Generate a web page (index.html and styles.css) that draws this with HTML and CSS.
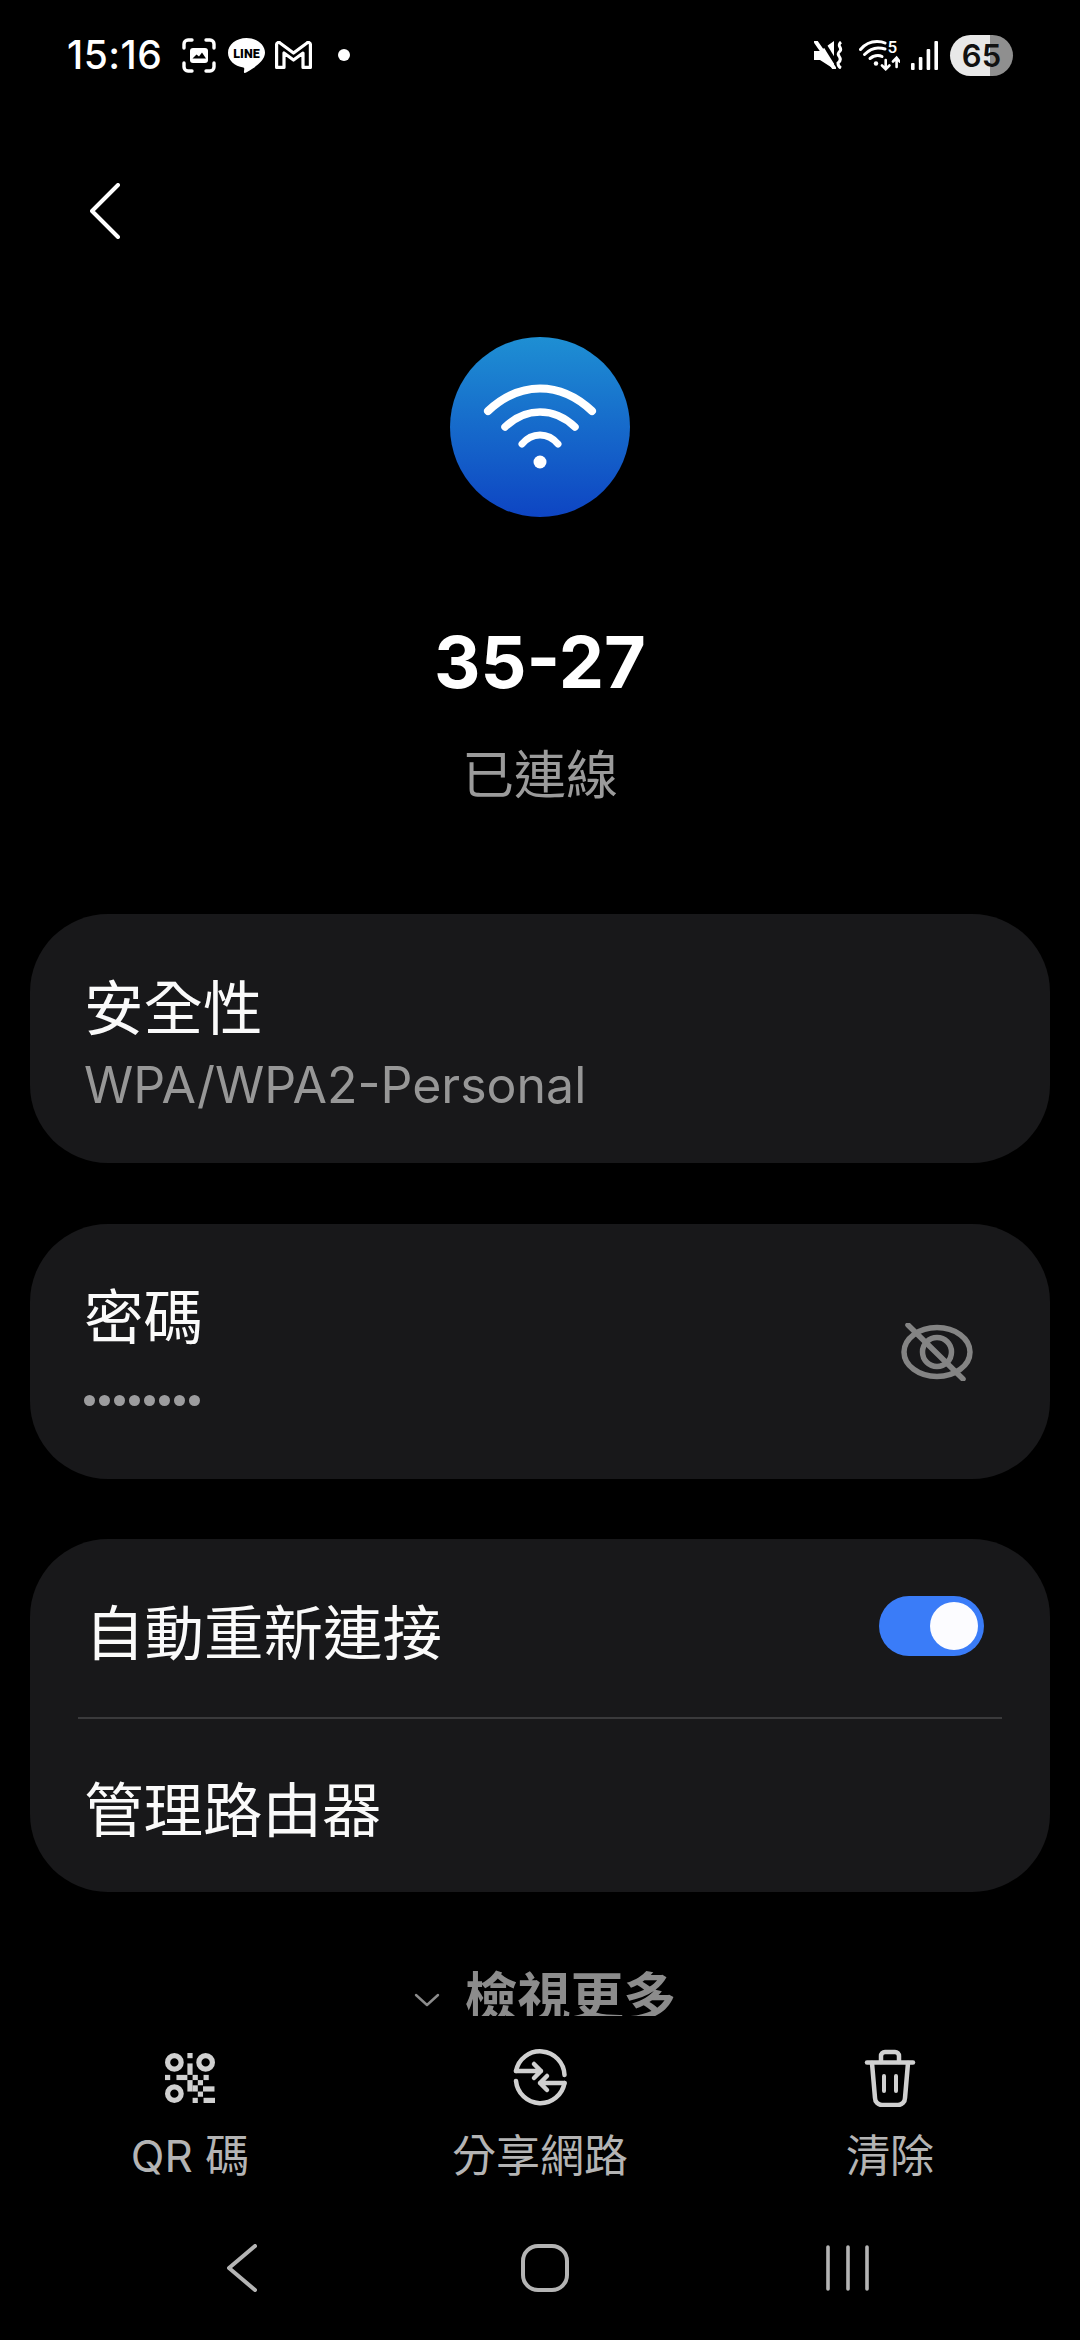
FILE: index.html
```html
<!DOCTYPE html>
<html lang="zh-Hant">
<head>
    <meta charset="UTF-8">
    <meta name="viewport" content="width=device-width, initial-scale=1.0">
    <title>35-27</title>
    <link rel="stylesheet" href="styles.css">
</head>
<body>
<div class="screen">
    <div class="scroll">
        <div class="status">
            <div class="status-left">
                <span class="time">15:16</span>
                <svg class="ic-shot" width="36" height="35" viewBox="0 0 36 35" fill="none" stroke="#fff" stroke-width="3.400" stroke-linecap="round">
                    <path d="M3 10V6a4 4 0 0 1 4-4h4M25 2h4a4 4 0 0 1 4 4v4M33 25v4a4 4 0 0 1-4 4h-4M11 33H7a4 4 0 0 1-4-4v-4"/>
                    <path d="M12 10h12a3 3 0 0 1 3 3v9a3 3 0 0 1-3 3H12a3 3 0 0 1-3-3v-9a3 3 0 0 1 3-3z" fill="#fff" stroke="none"/>
                    <path d="M11.500 20.500l4-4 2.500 2 3-4 4 6z" fill="#000" stroke="none"/>
                </svg>
                <svg class="ic-line" width="37" height="35" viewBox="0 0 37 35">
                    <path d="M18.500 0C8.300 0 0 6.600 0 14.800c0 7.400 6.500 13.500 15.400 14.700.8.200 1 1 .8 2l-.3 2.500c0 .8.600 1.300 1.500.8 3.500-1.700 19.600-10.400 19.600-20C37 6.600 28.700 0 18.500 0z" fill="#fff"/>
                    <text x="18.500" y="19.500" text-anchor="middle" class="line-word">LINE</text>
                </svg>
                <svg class="ic-gmail" width="37" height="28" viewBox="0 0 37 28" fill="none" stroke="#fff" stroke-width="3.200" stroke-linejoin="round">
                    <path d="M1.600 3.500 A2 2 0 0 1 5 2l13.500 10L32 2a2 2 0 0 1 3.400 1.500V26.400H28V12l-9.500 7L9 12v14.400H1.600z"/>
                </svg>
                <span class="notif-dot"></span>
            </div>
            <div class="status-right">
                <svg class="ic-mute" width="29" height="28" viewBox="0 0 29 28">
                    <path d="M0 10h6L20 0v28L6 19H0z" fill="#fff"/>
                    <path d="M7 -2L25 27" stroke="#000" stroke-width="4"/>
                    <path d="M2 1l18 26" stroke="#fff" stroke-width="4" stroke-linecap="round"/>
                    <path d="M27 1c-5 4 2 6-1 9s-2 3-1 5c2 3 2 5-1 7 0 2 1 4 3 5" fill="none" stroke="#fff" stroke-width="3"/>
                </svg>
                <svg class="ic-wifi" width="41" height="31" viewBox="0 0 41 31" fill="none" stroke="#fff" stroke-linecap="round">
                    <path d="M1.500 9.500C6 4 13 1.500 18 1.500c3 0 6 .5 8 1.500" stroke-width="3"/>
                    <path d="M5.500 14.500C10 10 15 8 19 8c2.500 0 5 .3 7 1" stroke-width="3"/>
                    <path d="M11 18.500c3-2.500 8-4 12-2" stroke-width="3"/>
                    <circle cx="17" cy="23.500" r="2.200" fill="#fff" stroke="none"/>
                    <text x="28.500" y="12.500" class="wifi-five" fill="#fff" stroke="none">5</text>
                    <path d="M26.700 20v9M23 25.500l3.700 3.700 3.700-3.700" stroke-width="2.600"/>
                    <path d="M37.600 27V18M34 21.500l3.600-3.700 3 3.700" stroke-width="2.600"/>
                </svg>
                <svg class="ic-signal" width="27" height="29" viewBox="0 0 27 29" fill="#fff">
                    <rect x="0" y="22" width="3.600" height="7" rx="1"/>
                    <rect x="7.800" y="16" width="3.600" height="13" rx="1"/>
                    <rect x="15.600" y="8" width="3.600" height="21" rx="1"/>
                    <rect x="23.400" y="0" width="3.600" height="29" rx="1"/>
                </svg>
                <span class="battery">65</span>
            </div>
        </div>

        <div class="topbar">
            <svg width="30" height="56" viewBox="0 0 30 56" fill="none" stroke="#fff" stroke-width="4" stroke-linecap="round" stroke-linejoin="round">
                <path d="M28 2L2 28l26 26"/>
            </svg>
        </div>

        <div class="hero">
            <div class="wifi-badge">
                <svg width="180" height="180" viewBox="0 0 180 180" fill="none" stroke="#fff" stroke-linecap="round">
                    <path d="M38 74C70 44 110 44 142 74" stroke-width="8"/>
                    <path d="M55 90C76 70 104 70 125 90" stroke-width="7.500"/>
                    <path d="M72 107C82 95 98 95 108 107" stroke-width="7"/>
                    <circle cx="90" cy="125" r="6.500" fill="#fff" stroke="none"/>
                </svg>
            </div>
            <h1 class="net-name">35-27</h1>
            <div class="net-state">已連線</div>
        </div>

        <div class="card card-security">
            <div class="row-title">安全性</div>
            <div class="row-sub">WPA/WPA2-Personal</div>
        </div>

        <div class="card card-password">
            <div>
                <div class="row-title">密碼</div>
                <div class="pw-dots">
                    <i></i><i></i><i></i><i></i><i></i><i></i><i></i><i></i>
                </div>
            </div>
            <svg class="ic-eye" width="72" height="58" viewBox="0 0 72 58" fill="none" stroke="#848484" stroke-width="5.500" stroke-linecap="round">
                <ellipse cx="36" cy="29" rx="33" ry="24.500"/>
                <circle cx="36" cy="29" r="14.500"/>
                <path d="M7 2l55 54"/>
            </svg>
        </div>

        <div class="card card-options">
            <div class="opt-row opt-toggle">
                <span class="row-title">自動重新連接</span>
                <span class="switch"><span class="thumb"></span></span>
            </div>
            <div class="divider"></div>
            <div class="opt-row opt-router">
                <span class="row-title">管理路由器</span>
            </div>
        </div>

        <div class="more">
            <svg class="more-chev" width="26" height="14" viewBox="0 0 26 14" fill="none" stroke="#8c8c8c" stroke-width="2.400" stroke-linecap="round" stroke-linejoin="round">
                <path d="M2 2l11 10L24 2"/>
            </svg>
            <span class="more-text">檢視更多</span>
        </div>
    </div>

    <div class="actions">
        <div class="action">
            <svg width="50" height="50" viewBox="0 0 48 48" fill="#d0d0d0">
                <g fill="none" stroke="#d0d0d0" stroke-width="5">
                    <circle cx="9" cy="9" r="6.500"/>
                    <circle cx="39" cy="9" r="6.500"/>
                    <circle cx="9" cy="39" r="6.500"/>
                </g>
                <rect x="21.500" y="0" width="5" height="5"/>
                <rect x="21.500" y="10" width="5" height="11"/>
                <rect x="0" y="21" width="5" height="5"/>
                <rect x="11" y="21" width="10.500" height="5"/>
                <rect x="26.500" y="21" width="5" height="5"/>
                <rect x="37" y="21" width="5" height="5"/>
                <rect x="21.500" y="26" width="5" height="11"/>
                <rect x="31.500" y="26" width="5" height="5"/>
                <rect x="26.500" y="31" width="5" height="6"/>
                <rect x="36.500" y="32" width="11" height="5"/>
                <rect x="31.500" y="37" width="5" height="5"/>
                <rect x="26.500" y="43" width="5" height="5"/>
                <rect x="37" y="43" width="11" height="5"/>
            </svg>
            <span class="action-label">QR 碼</span>
        </div>
        <div class="action">
            <svg width="54" height="54" viewBox="0 0 54 54" fill="none" stroke="#d0d0d0" stroke-width="4.500" stroke-linecap="round" stroke-linejoin="round">
                <path d="M3 20A24.500 24.500 0 0 1 51.500 24"/>
                <path d="M3 30A24.500 24.500 0 0 0 51.500 32"/>
                <path d="M3 20H28M21 13l7 7-7 7"/>
                <path d="M51.500 32H27M34 25l-7 7 7 7"/>
            </svg>
            <span class="action-label">分享網路</span>
        </div>
        <div class="action">
            <svg width="52" height="58" viewBox="0 0 52 58" fill="none" stroke="#d0d0d0" stroke-width="4.500" stroke-linecap="round" stroke-linejoin="round">
                <path d="M3 13.500h46"/>
                <path d="M17 13V7a4 4 0 0 1 4-4h10a4 4 0 0 1 4 4v6"/>
                <path d="M8 14l3 35a7 7 0 0 0 7 7h16a7 7 0 0 0 7-7l3-35"/>
                <path d="M20 27v15M32 27v15" stroke-width="4"/>
            </svg>
            <span class="action-label">清除</span>
        </div>
    </div>

    <div class="navbar">
        <svg class="nav-back" width="30" height="48" viewBox="0 0 30 48" fill="none" stroke="#b4b4b4" stroke-width="4" stroke-linecap="round" stroke-linejoin="round">
            <path d="M28 2L2 24l26 22"/>
        </svg>
        <svg class="nav-home" width="48" height="48" viewBox="0 0 48 48" fill="none" stroke="#b4b4b4" stroke-width="4">
            <rect x="2" y="2" width="44" height="44" rx="15"/>
        </svg>
        <svg class="nav-recents" width="44" height="46" viewBox="0 0 44 46" stroke="#b4b4b4" stroke-width="3.600" stroke-linecap="round">
            <path d="M2 2v42M22 2v42M41 2v42"/>
        </svg>
    </div>
</div>
</body>
</html>
```

FILE: styles.css
```css
* {
    box-sizing: border-box;
}
html, body {
    margin: 0;
    padding: 0;
    background: #000;
}
body {
    color: #fff;
    font-family: Inter, "Noto Sans CJK TC", sans-serif;
}
.screen {
    width: 1080px;
    height: 2340px;
    display: flex;
    flex-direction: column;
    overflow: hidden;
}
.scroll {
    height: 2016px;
    flex: none;
    overflow: hidden;
}

/* status bar */
.status {
    height: 110px;
    display: flex;
    align-items: center;
    justify-content: space-between;
    padding: 0 67px 0 67px;
}
.status-left, .status-right {
    display: flex;
    align-items: center;
}
.time {
    font-size: 39px;
    font-weight: 500;
    letter-spacing: 0.5px;
    line-height: 46px;
    width: 114px;
}
.ic-line {
    margin-left: 11px;
}
.ic-gmail {
    margin-left: 10px;
}
.line-word {
    font-family: Roboto, sans-serif;
    font-size: 12.500px;
    font-weight: 900;
    fill: #000;
}
.notif-dot {
    width: 12px;
    height: 12px;
    margin-left: 26px;
    border-radius: 50%;
    background: #fff;
}
.ic-wifi {
    margin-left: 16px;
}
.wifi-five {
    font-family: Roboto, sans-serif;
    font-size: 17px;
    font-weight: 500;
}
.ic-signal {
    margin-left: 11px;
}
.battery {
    width: 63px;
    height: 41px;
    margin-left: 12px;
    border-radius: 21px;
    background: linear-gradient(90deg, #e8e8e8 0, #e8e8e8 40px, #8f8f8f 40px);
    color: #111;
    font-size: 31px;
    font-weight: 600;
    line-height: 41px;
    text-align: center;
}

/* header */
.topbar {
    height: 227px;
    padding: 73px 0 0 90px;
}
.topbar svg {
    display: block;
}
.hero {
    display: flex;
    flex-direction: column;
    align-items: center;
}
.wifi-badge {
    width: 180px;
    height: 180px;
    border-radius: 50%;
    background: linear-gradient(180deg, #1e8fd3, #0e45c3);
}
.wifi-badge svg {
    display: block;
}
.net-name {
    margin: 97px 0 0;
    font-size: 72px;
    font-weight: 700;
    line-height: 96px;
}
.net-state {
    margin-top: 28px;
    font-size: 52px;
    line-height: 76px;
    color: #9b9b9b;
}

/* cards */
.card {
    margin: 0 30px;
    border-radius: 78px;
    background: #18181a;
}
.row-title {
    font-size: 59.500px;
    line-height: 80px;
    color: #fafafa;
}
.row-sub {
    margin-top: 7px;
    font-size: 50px;
    line-height: 60px;
    color: #979797;
}
.card-security {
    height: 249px;
    margin-top: 100px;
    padding: 54px 0 0 54px;
}
.card-password {
    height: 255px;
    margin-top: 61px;
    padding: 53px 77px 0 54px;
    display: flex;
    justify-content: space-between;
    align-items: flex-start;
}
.pw-dots {
    display: flex;
    gap: 4px;
    margin-top: 38px;
}
.pw-dots i {
    width: 11px;
    height: 11px;
    border-radius: 50%;
    background: #9c9c9e;
}
.ic-eye {
    margin-top: 46px;
}
.card-options {
    height: 353px;
    margin-top: 60px;
}
.opt-row {
    display: flex;
    align-items: center;
    justify-content: space-between;
    padding: 0 66px 0 55px;
}
.opt-row .row-title {
    padding-top: 9px;
}
.opt-toggle {
    height: 178px;
}
.opt-router {
    height: 173px;
    padding-left: 54px;
}
.switch {
    width: 105px;
    height: 60px;
    border-radius: 30px;
    background: #3a7cf8;
    display: flex;
    align-items: center;
    justify-content: flex-end;
    padding-right: 6px;
    margin-bottom: 4px;
}
.thumb {
    width: 48px;
    height: 48px;
    border-radius: 50%;
    background: #fcfcff;
}
.divider {
    height: 2px;
    margin: 0 48px;
    background: #3a3a3c;
}
.more {
    display: flex;
    align-items: center;
    justify-content: center;
    gap: 25px;
    margin-top: 68px;
    padding-left: 10px;
}
.more-chev {
    margin-top: 3px;
}
.more-text {
    font-size: 53px;
    font-weight: 700;
    line-height: 76px;
    color: #8c8c8c;
}

/* bottom actions */
.actions {
    height: 214px;
    flex: none;
    display: grid;
    grid-template-columns: 350px 350px 350px;
    padding: 0 15px;
}
.action {
    display: flex;
    flex-direction: column;
    align-items: center;
}
.action svg {
    display: block;
    margin-top: 33px;
    height: 58px;
}
.action-label {
    margin-top: 18px;
    font-size: 44px;
    line-height: 62px;
    color: #b4b4b4;
}

/* system nav */
.navbar {
    flex: 1;
    position: relative;
}
.navbar svg {
    position: absolute;
}
.nav-back {
    left: 227px;
    top: 14px;
}
.nav-home {
    left: 521px;
    top: 14px;
}
.nav-recents {
    left: 826px;
    top: 15px;
}
```
